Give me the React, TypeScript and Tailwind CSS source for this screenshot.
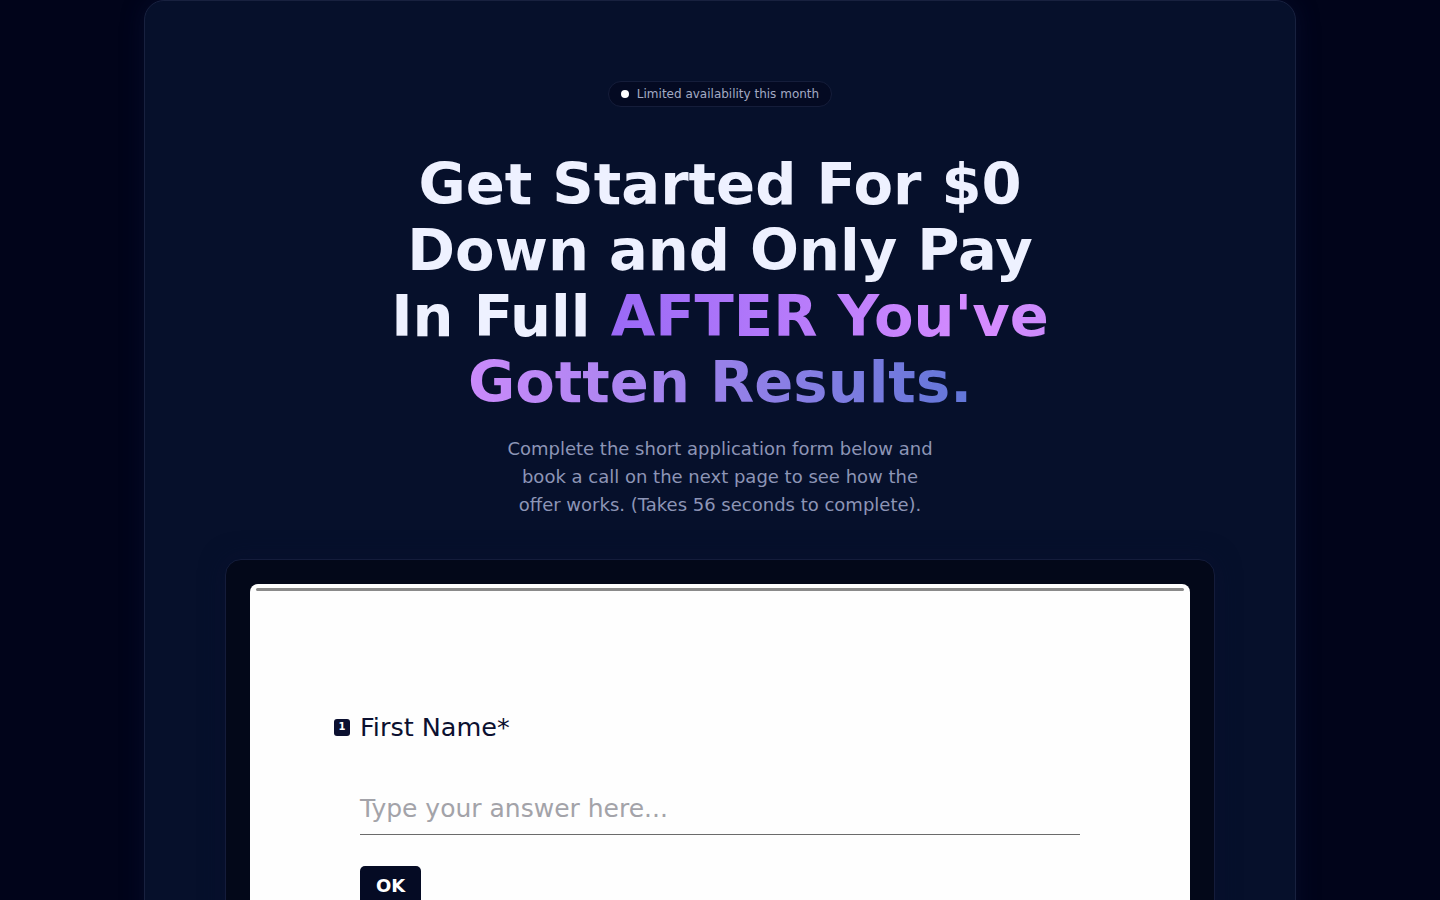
export default function App() {
  return (
    <div className="min-h-screen overflow-hidden bg-[#01041a] font-['DejaVu_Sans',sans-serif]">
      <main className="mx-auto max-w-6xl rounded-[20px] border border-[#18213f] bg-[#06102b] px-20 pt-20 pb-20 shadow-[0_0_24px_rgba(20,30,80,0.3)]">
        {/* Badge */}
        <div className="flex justify-center">
          <span className="flex items-center gap-2 rounded-full border border-[#151d3a] bg-[#040a22] py-1 pr-3 pl-3 text-xs leading-4 text-[#a3aac4]">
            <span className="block h-2 w-2 rounded-full bg-white" />
            Limited availability this month
          </span>
        </div>

        {/* Heading */}
        <h1 className="mx-auto mt-[45px] max-w-2xl text-center text-[57.6px] leading-[66px] font-bold text-[#eef1ff]">
          Get Started For $0 Down and Only Pay In Full{' '}
          <span className="bg-linear-to-r from-[#9a69f6] via-[#d68cff] via-40% to-[#6176d8] bg-clip-text text-transparent">
            AFTER You&apos;ve Gotten Results.
          </span>
        </h1>

        <p className="mx-auto mt-[19px] max-w-[440px] text-center text-lg leading-7 text-[#8d95b6]">
          Complete the short application form below and book a call on the next page to see how the offer works. (Takes 56 seconds to complete).
        </p>

        {/* Form frame */}
        <div className="mt-10 rounded-2xl border border-[#141c3b] bg-[#030819] p-6 shadow-[0_0_24px_rgba(10,15,50,0.5)]">
          <div className="min-h-[560px] rounded-lg bg-[#fefefe] pt-1">
            <div className="mx-1.5 h-[3px] rounded-full bg-[#8a8a8a]" />
            <div className="mx-auto w-[720px] pt-[120px]">
              <div className="-ml-[26px] flex items-center gap-2.5">
                <span className="flex h-[17px] w-4 items-center justify-center rounded-[3px] bg-[#0b1030] text-[10px] leading-none font-bold text-white">
                  1
                </span>
                <span className="text-[25.5px] leading-8 text-[#0b1030]">First Name*</span>
              </div>
              <div className="mt-[50px] border-b border-[#6b6b6b] pb-[9px] text-[25px] leading-8 text-[#a3a3a9]">
                Type your answer here...
              </div>
              <button className="mt-[31px] h-10 rounded-[5px] bg-[#050b24] px-4 text-lg font-bold text-white">
                OK
              </button>
            </div>
          </div>
        </div>
      </main>
    </div>
  )
}
